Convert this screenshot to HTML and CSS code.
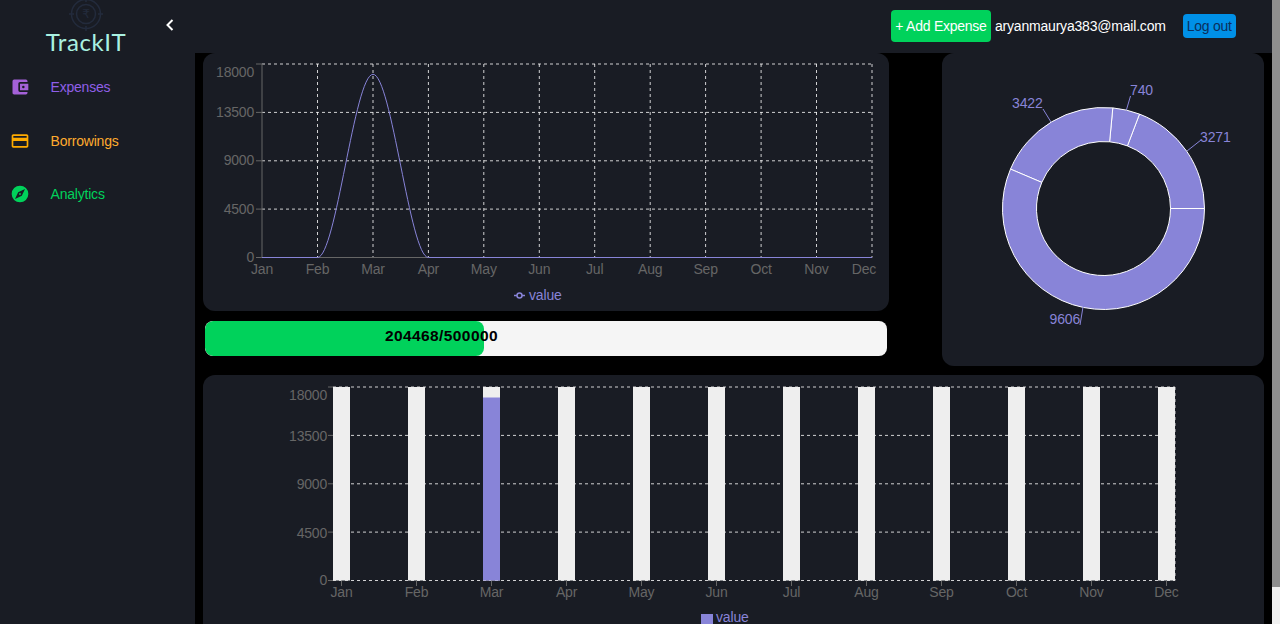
FILE: index.html
```html
<!DOCTYPE html>
<html lang="en">
<head>
    <meta charset="UTF-8">
    <meta name="viewport" content="width=device-width, initial-scale=1.0">
    <title>TrackIT</title>
    <link rel="stylesheet" href="styles.css">
</head>
<body>
    <div class="app">
        <aside class="sidebar">
            <div class="sidebar-top">
                <div class="brand">
                    <svg class="brand-icon" width="34" height="34" viewBox="0 0 34 34">
                        <circle cx="17" cy="17" r="14.5"/>
                        <circle cx="17" cy="17" r="9.5"/>
                        <path d="M17 0V5M17 29V34M0 17H5M29 17H34"/>
                        <text x="17" y="21" text-anchor="middle">₹</text>
                    </svg>
                    <div class="brand-name">TrackIT</div>
                </div>
                <svg class="collapse-icon" width="10" height="14" viewBox="0 0 10 14">
                    <path d="M7.5 2L2.5 7L7.5 12"/>
                </svg>
            </div>
            <nav class="nav">
                <a class="nav-item nav-purple">
                    <svg width="20" height="20" viewBox="0 0 24 24"><path d="M21,18V19A2,2 0 0,1 19,21H5C3.89,21 3,20.1 3,19V5A2,2 0 0,1 5,3H19A2,2 0 0,1 21,5V6H12C10.89,6 10,6.9 10,8V16A2,2 0 0,0 12,18M12,16H22V8H12M16,13.5A1.5,1.5 0 0,1 14.5,12A1.5,1.5 0 0,1 16,10.5A1.5,1.5 0 0,1 17.5,12A1.5,1.5 0 0,1 16,13.5Z"/></svg>
                    <span>Expenses</span>
                </a>
                <a class="nav-item nav-orange">
                    <svg width="20" height="20" viewBox="0 0 24 24"><path d="M20,8H4V6H20M20,18H4V12H20M20,4H4C2.89,4 2,4.89 2,6V18C2,19.11 2.89,20 4,20H20C21.11,20 22,19.11 22,18V6C22,4.89 21.11,4 20,4Z"/></svg>
                    <span>Borrowings</span>
                </a>
                <a class="nav-item nav-green">
                    <svg width="20" height="20" viewBox="0 0 24 24"><path d="M14.19,14.19L6,18L9.81,9.81L18,6M12,2A10,10 0 0,0 2,12A10,10 0 0,0 12,22A10,10 0 0,0 22,12A10,10 0 0,0 12,2M12,10.9A1.1,1.1 0 0,0 10.9,12A1.1,1.1 0 0,0 12,13.1A1.1,1.1 0 0,0 13.1,12A1.1,1.1 0 0,0 12,10.9Z"/></svg>
                    <span>Analytics</span>
                </a>
            </nav>
        </aside>

        <div class="content">
            <header class="topbar">
                <button class="btn btn-add">+ Add Expense</button>
                <span class="email">aryanmaurya383@mail.com</span>
                <button class="btn btn-logout">Log out</button>
            </header>

            <main class="main">
                <div class="row-top">
                    <div class="col-left">
                        <section class="card card-line">
                            <svg class="chart" width="686" height="258" viewBox="203 53 686 258">
                                <g class="grid">
                                    <path d="M262 64H872M262 112.4H872M262 160.8H872M262 209.1H872"/>
                                    <path d="M317.5 64V257.5M373 64V257.5M428.4 64V257.5M483.8 64V257.5M539.3 64V257.5M594.7 64V257.5M650.2 64V257.5M705.6 64V257.5M761.1 64V257.5M816.5 64V257.5M872 64V257.5"/>
                                </g>
                                <path class="axis" d="M262 64V257.5H872M256 64H262M256 112.4H262M256 160.8H262M256 209.1H262M256 257.5H262"/>
                                <path class="series" d="M262 257.5H317.5C336 257.5 354.5 74.3 373 74.3C391.5 74.3 410 257.5 428.4 257.5H872"/>
                                <g class="tick-y">
                                    <text x="254" y="77">18000</text>
                                    <text x="254" y="117">13500</text>
                                    <text x="254" y="165">9000</text>
                                    <text x="254" y="214">4500</text>
                                    <text x="254" y="262">0</text>
                                </g>
                                <g class="tick-x">
                                    <text x="262" y="274">Jan</text>
                                    <text x="317.5" y="274">Feb</text>
                                    <text x="373" y="274">Mar</text>
                                    <text x="428.4" y="274">Apr</text>
                                    <text x="483.8" y="274">May</text>
                                    <text x="539.3" y="274">Jun</text>
                                    <text x="594.7" y="274">Jul</text>
                                    <text x="650.2" y="274">Aug</text>
                                    <text x="705.6" y="274">Sep</text>
                                    <text x="761.1" y="274">Oct</text>
                                    <text x="816.5" y="274">Nov</text>
                                    <text x="864" y="274">Dec</text>
                                </g>
                                <path class="legend-line" d="M514 295.5H525"/>
                                <circle class="legend-dot" cx="519.5" cy="295.5" r="2.5"/>
                                <text class="legend" x="529" y="299.5">value</text>
                            </svg>
                        </section>
                        <div class="progress">
                            <div class="progress-fill" style="width: 40.9%"></div>
                            <span class="progress-text">204468/500000</span>
                        </div>
                    </div>
                    <section class="card card-donut">
                        <svg class="chart" width="322" height="313" viewBox="942 53 322 313">
                            <g class="slice">
                                <path d="M1204.5 208.5A101 101 0 0 0 1139.5 114.1L1127.4 145.9A67 67 0 0 1 1170.5 208.5Z"/>
                                <path d="M1139.5 114.1A101 101 0 0 0 1112.8 107.9L1109.6 141.8A67 67 0 0 1 1127.4 145.9Z"/>
                                <path d="M1112.8 107.9A101 101 0 0 0 1010.5 169.1L1041.8 182.4A67 67 0 0 1 1109.6 141.8Z"/>
                                <path d="M1010.5 169.1A101 101 0 1 0 1204.5 208.5L1170.5 208.5A67 67 0 1 1 1041.8 182.4Z"/>
                            </g>
                            <path class="leader" d="M1187 151L1201 140M1126.4 110L1130.5 96M1051 122L1043 109M1083 307L1080 325"/>
                            <g class="donut-label">
                                <text x="1200" y="142">3271</text>
                                <text x="1130" y="95">740</text>
                                <text x="1012" y="108">3422</text>
                                <text x="1049.5" y="324">9606</text>
                            </g>
                        </svg>
                    </section>
                </div>

                <section class="card card-bar">
                    <svg class="chart" width="1061" height="260" viewBox="203 375 1061 260">
                        <path class="grid" d="M333 387H1175M333 435.4H1175M333 483.8H1175M333 532.1H1175M333 580.5H1175M1175 387V580.5"/>
                        <g class="bar-bg">
                            <rect x="333" y="387" width="17" height="193.5"/>
                            <rect x="408" y="387" width="17" height="193.5"/>
                            <rect x="483" y="387" width="17" height="193.5"/>
                            <rect x="558" y="387" width="17" height="193.5"/>
                            <rect x="633" y="387" width="17" height="193.5"/>
                            <rect x="708" y="387" width="17" height="193.5"/>
                            <rect x="783" y="387" width="17" height="193.5"/>
                            <rect x="858" y="387" width="17" height="193.5"/>
                            <rect x="933" y="387" width="17" height="193.5"/>
                            <rect x="1008" y="387" width="17" height="193.5"/>
                            <rect x="1083" y="387" width="17" height="193.5"/>
                            <rect x="1158" y="387" width="17" height="193.5"/>
                        </g>
                        <rect class="bar-value" x="483" y="397.5" width="17" height="183"/>
                        <path class="axis" d="M328 387H333M328 435.4H333M328 483.8H333M328 532.1H333M328 580.5H333M341.5 580.5V586M416.5 580.5V586M491.5 580.5V586M566.5 580.5V586M641.5 580.5V586M716.5 580.5V586M791.5 580.5V586M866.5 580.5V586M941.5 580.5V586M1016.5 580.5V586M1091.5 580.5V586M1166.5 580.5V586"/>
                        <g class="tick-y">
                            <text x="327" y="400">18000</text>
                            <text x="327" y="441">13500</text>
                            <text x="327" y="489">9000</text>
                            <text x="327" y="538">4500</text>
                            <text x="327" y="585">0</text>
                        </g>
                        <g class="tick-x">
                            <text x="341.5" y="597">Jan</text>
                            <text x="416.5" y="597">Feb</text>
                            <text x="491.5" y="597">Mar</text>
                            <text x="566.5" y="597">Apr</text>
                            <text x="641.5" y="597">May</text>
                            <text x="716.5" y="597">Jun</text>
                            <text x="791.5" y="597">Jul</text>
                            <text x="866.5" y="597">Aug</text>
                            <text x="941.5" y="597">Sep</text>
                            <text x="1016.5" y="597">Oct</text>
                            <text x="1091.5" y="597">Nov</text>
                            <text x="1166.5" y="597">Dec</text>
                        </g>
                        <rect class="bar-value" x="701" y="614" width="12" height="10"/>
                        <text class="legend" x="716" y="622">value</text>
                    </svg>
                </section>
            </main>
        </div>

        <div class="scrollbar"><div class="scrollbar-thumb"></div></div>
    </div>
</body>
</html>
```

FILE: styles.css
```css
* {
    box-sizing: border-box;
}
html, body {
    height: 100%;
    margin: 0;
    overflow: hidden;
}
body {
    font-family: "Liberation Sans", Arial, sans-serif;
    background-color: #000;
}
.app {
    display: flex;
    height: 624px;
}

/* sidebar */
.sidebar {
    width: 195px;
    flex-shrink: 0;
    background-color: #191c24;
}
.sidebar-top {
    display: flex;
    align-items: flex-start;
    height: 77px;
    padding-left: 46px;
}
.brand {
    display: flex;
    flex-direction: column;
    align-items: center;
    width: 80px;
    margin-top: -3px;
}
.brand-icon {
    display: block;
}
.brand-icon circle,
.brand-icon path {
    fill: none;
    stroke: #232b3c;
    stroke-width: 1.5;
}
.brand-icon text {
    fill: #232b3c;
    font-family: "DejaVu Sans", sans-serif;
    font-size: 12px;
}
.brand-name {
    font-family: "Lato", sans-serif;
    font-size: 24px;
    line-height: 24px;
    letter-spacing: 0.6px;
    color: #a9f1e1;
    white-space: nowrap;
    margin-top: -1px;
}
.collapse-icon {
    margin-left: 39px;
    margin-top: 18px;
}
.collapse-icon path {
    fill: none;
    stroke: #fff;
    stroke-width: 2;
}
.nav {
    display: flex;
    flex-direction: column;
    gap: 33.5px;
    padding-left: 10px;
}
.nav-item {
    display: flex;
    align-items: center;
    gap: 20.5px;
    height: 20px;
    font-size: 14px;
    letter-spacing: -0.2px;
}
.nav-item svg {
    fill: currentColor;
    flex-shrink: 0;
}
.nav-purple {
    color: #8f5fe8;
}
.nav-purple svg {
    fill: #a461d8;
}
.nav-orange {
    color: #ffab2e;
}
.nav-orange svg {
    fill: #ffab00;
}
.nav-green {
    color: #00d25b;
}

/* header */
.content {
    flex: 1;
    min-width: 0;
    display: flex;
    flex-direction: column;
}
.topbar {
    height: 53px;
    flex-shrink: 0;
    display: flex;
    align-items: center;
    padding-left: 696px;
    background-color: #191c24;
}
.btn {
    border: none;
    font-family: inherit;
    font-size: 14px;
    letter-spacing: -0.25px;
    padding: 0;
}
.btn-add {
    width: 100px;
    height: 32px;
    border-radius: 4px;
    background-color: #00d25b;
    color: #fff;
    margin-top: -1px;
}
.email {
    color: #fff;
    font-size: 14px;
    letter-spacing: -0.2px;
    margin-left: 4px;
    margin-top: -1px;
}
.btn-logout {
    width: 53px;
    height: 24px;
    border-radius: 4px;
    background-color: #0090e7;
    color: #0b2f5c;
    margin-left: 17px;
    margin-top: -1px;
}

/* main */
.main {
    flex: 1;
    overflow: hidden;
    padding: 0 8px;
}
.row-top {
    display: flex;
    justify-content: space-between;
    align-items: flex-start;
}
.col-left {
    width: 686px;
}
.card {
    background-color: #191c24;
    border-radius: 12px;
    overflow: hidden;
}
.card-line {
    height: 258px;
}
.card-donut {
    width: 322px;
    height: 313px;
}
.card-bar {
    height: 260px;
    margin-top: 9px;
}
.chart {
    display: block;
}
.progress {
    position: relative;
    display: flex;
    align-items: center;
    height: 35px;
    margin: 10px 2px 0;
    padding-left: 180px;
    border-radius: 8px;
    background-color: #f5f5f5;
    overflow: hidden;
}
.progress-fill {
    position: absolute;
    left: 0;
    top: 0;
    bottom: 0;
    background-color: #00d25b;
    border-radius: 8px;
}
.progress-text {
    position: relative;
    font-size: 15.5px;
    font-weight: bold;
    letter-spacing: 0.4px;
    color: #000;
    margin-bottom: 5px;
}

/* charts */
.grid,
.grid path {
    fill: none;
    stroke: #fff;
    stroke-width: 1;
    stroke-dasharray: 3 3;
    stroke-opacity: 0.8;
}
.axis {
    fill: none;
    stroke: #666;
    stroke-width: 1;
}
.series {
    fill: none;
    stroke: #8884d8;
    stroke-width: 1;
}
.legend-line {
    fill: none;
    stroke: #8884d8;
    stroke-width: 1.5;
}
.legend-dot {
    fill: #191c24;
    stroke: #8884d8;
    stroke-width: 1.5;
}
.legend,
.donut-label text {
    fill: #8884d8;
    font-size: 14px;
    letter-spacing: -0.15px;
}
.tick-y text,
.tick-x text {
    fill: #666;
    font-size: 14px;
    letter-spacing: -0.2px;
}
.tick-y text {
    text-anchor: end;
}
.tick-x text {
    text-anchor: middle;
}
.slice path {
    fill: #8884d8;
    stroke: #fff;
    stroke-width: 1;
}
.leader {
    fill: none;
    stroke: #8884d8;
    stroke-width: 1;
}
.bar-bg rect {
    fill: #eee;
}
.bar-value {
    fill: #8884d8;
}

/* page scrollbar */
.scrollbar {
    width: 8px;
    flex-shrink: 0;
    background-color: #f1f1f1;
}
.scrollbar-thumb {
    height: 587px;
    background-color: #8f8f8f;
}
```
